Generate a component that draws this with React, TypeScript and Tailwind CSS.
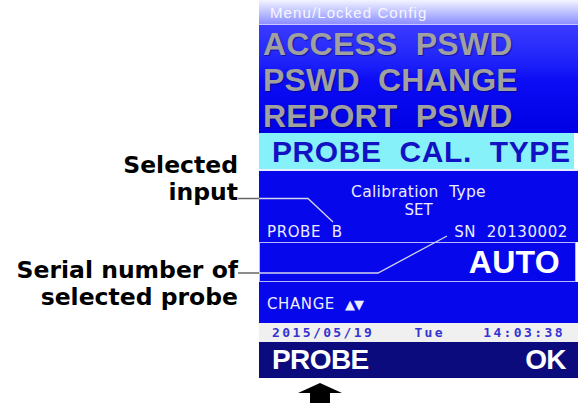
import React from "react";

export default function App() {
  const menuFont = { fontFamily: '"Liberation Sans", Arial, sans-serif' };
  return (
    <div className="relative w-[578px] h-[403px] bg-white overflow-hidden flex" >
      {/* Left labels */}
      <div
        className="w-[259px] shrink-0 flex flex-col items-end pr-[21px] text-black font-bold text-[23.5px] leading-[27px]"
        style={{ fontFamily: '"DejaVu Sans", Verdana, sans-serif' }}
      >
        <div className="mt-[152px] text-right">
          <div>Selected</div>
          <div>input</div>
        </div>
        <div className="mt-[51px] text-right">
          <div>Serial number of</div>
          <div>selected probe</div>
        </div>
      </div>

      {/* Device screen */}
      <div className="w-[319px] shrink-0 flex flex-col">
        {/* title */}
        <div
          className="h-[24px] bg-gradient-to-b from-[#f4f4ff] to-[#8e8eff] text-[#f6f6ff] text-[15px] tracking-[1.1px] pl-[11px] leading-[25px]"
          style={menuFont}
        >
          Menu/Locked Config
        </div>
        <div className="h-[1px] bg-[#c8c8ff]" />
        {/* menu items */}
        <div
          className="bg-gradient-to-b from-[#3a3aff] via-[#0d0df6] to-[#0000e4] text-[#a0a0a0] font-bold text-[32px] tracking-[0.2px] pl-[4px]"
          style={{ ...menuFont, textShadow: "1px 1px 1px rgba(0,0,60,0.5)" }}
        >
          <div className="h-[36px] leading-[38px] whitespace-pre">ACCESS  PSWD</div>
          <div className="h-[36px] leading-[38px] whitespace-pre">PSWD  CHANGE</div>
          <div className="h-[36px] leading-[38px] whitespace-pre">REPORT  PSWD</div>
        </div>
        {/* selected */}
        <div
          className="h-[36px] bg-[#86f1f8] text-[#1212c4] font-bold text-[30px] leading-[38px] pl-[13px] whitespace-pre tracking-[0.6px] mr-[4px]"
          style={menuFont}
        >
          PROBE  CAL.  TYPE
        </div>
        <div className="h-[2px] bg-[#e8f0ff]" />
        {/* info */}
        <div
          className="h-[71px] bg-[#0707ec] text-[#ececff] text-[15px] leading-[18px] flex flex-col pt-[12px]"
          style={{ fontFamily: '"DejaVu Sans", Verdana, sans-serif' }}
        >
          <div className="text-center whitespace-pre text-[15.5px] tracking-[0.3px]">Calibration  Type</div>
          <div className="text-center">SET</div>
          <div className="flex justify-between pl-[8px] pr-[10px] mt-[4px] tracking-[0.6px]">
            <span className="whitespace-pre">PROBE  B</span>
            <span className="whitespace-pre">SN  20130002</span>
          </div>
        </div>
        {/* AUTO */}
        <div className="h-[40px] bg-[#0707ec] border border-[#b8b8ff] mr-[2px] flex items-center justify-end pr-[15px]">
          <span
            className="text-white font-bold text-[32px] leading-none tracking-[0.3px]"
            style={menuFont}
          >
            AUTO
          </span>
        </div>
        {/* CHANGE */}
        <div
          className="h-[41px] bg-[#0707ec] text-[#ececff] text-[15px] flex items-center pl-[8px] pt-[4px] tracking-[0.6px]"
          style={{ fontFamily: '"DejaVu Sans", Verdana, sans-serif' }}
        >
          CHANGE
          <span className="ml-[10px] text-[13px] tracking-[-1px] font-bold">▲▼</span>
        </div>
        {/* date */}
        <div
          className="h-[19px] bg-[#f0f0f0] text-[#3434d2] font-bold text-[13px] leading-[19px] flex justify-between px-[13px] tracking-[2.4px]"
          style={{ fontFamily: '"DejaVu Sans Mono", monospace' }}
        >
          <span>2015/05/19</span>
          <span className="ml-[2px]">Tue</span>
          <span>14:03:38</span>
        </div>
        {/* softkeys */}
        <div
          className="h-[36px] bg-[#0b0b7e] text-white font-bold text-[28px] leading-[36px] flex justify-between pl-[13px] pr-[12px] tracking-[-0.6px]"
          style={menuFont}
        >
          <span>PROBE</span>
          <span>OK</span>
        </div>
      </div>

      {/* annotation drawing overlay */}
      <svg
        className="absolute inset-0 pointer-events-none"
        width="578"
        height="403"
        viewBox="0 0 578 403"
      >
        <line x1="238" y1="198.5" x2="259" y2="198.5" stroke="#666" strokeWidth="1.5" />
        <polyline points="259,198.5 308,198.5 333,222" fill="none" stroke="#d4d4ee" strokeWidth="1.3" />
        <line x1="238" y1="273" x2="259" y2="273" stroke="#666" strokeWidth="1.5" />
        <polyline points="259,273 378,273 447,236" fill="none" stroke="#d4d4ee" strokeWidth="1.3" />
        <polygon points="298,393 320,383 342,393 330,393 330,403 310,403 310,393" fill="#000" />
      </svg>
    </div>
  );
}
